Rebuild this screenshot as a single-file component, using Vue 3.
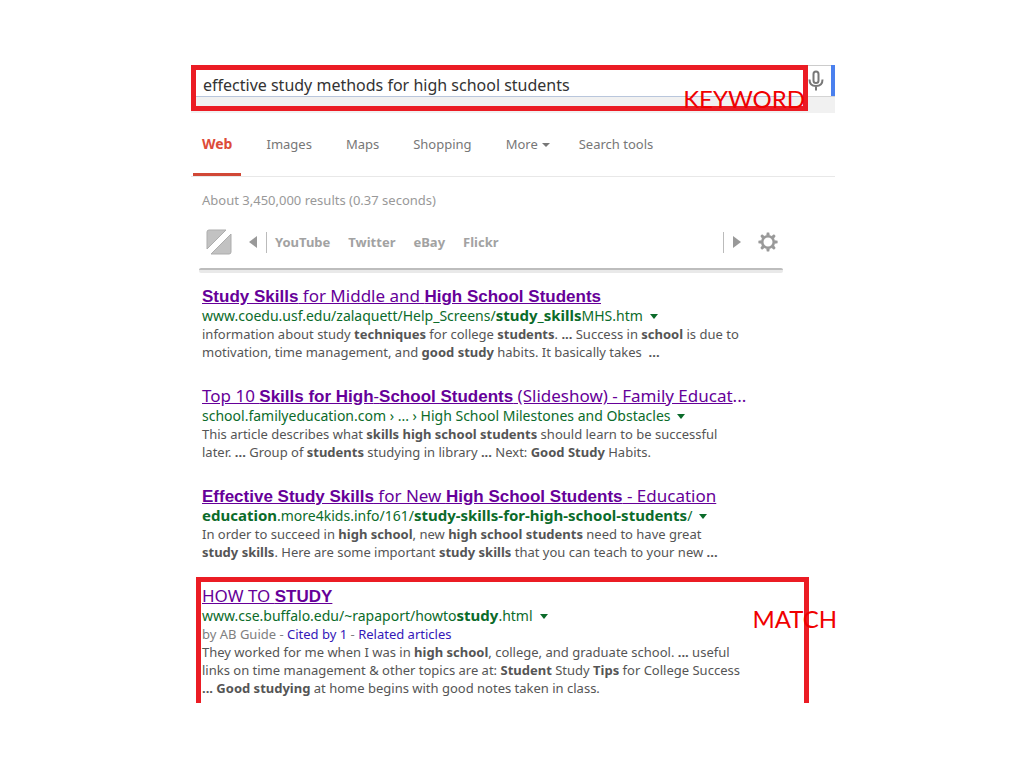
<script setup>
import { ref } from 'vue'

const query = ref('effective study methods for high school students')
const tabs = ['Web', 'Images', 'Maps', 'Shopping', 'More', 'Search tools']
const sites = ['YouTube', 'Twitter', 'eBay', 'Flickr']

// Text between asterisks is drawn bold.
const results = [
  {
    title: '*Study Skills* for Middle and *High School Students*',
    url: 'www.coedu.usf.edu/zalaquett/Help_Screens/*study_skills*MHS.htm',
    lines: [
      'information about study *techniques* for college *students*. *...* Success in *school* is due to',
      'motivation, time management, and *good study* habits. It basically takes  *...*'
    ]
  },
  {
    title: 'Top 10 *Skills for High*-*School Students* (Slideshow) - Family Educat',
    more: '...',
    url: 'school.familyeducation.com › ... › High School Milestones and Obstacles',
    lines: [
      'This article describes what *skills high school students* should learn to be successful',
      'later. *...* Group of *students* studying in library *...* Next: *Good Study* Habits.'
    ]
  },
  {
    title: '*Effective Study Skills* for New *High School Students* - Education',
    url: '*education*.more4kids.info/161/*study-skills-for-high-school-students*/',
    lines: [
      'In order to succeed in *high school*, new *high school students* need to have great',
      '*study skills*. Here are some important *study skills* that you can teach to your new *...*'
    ]
  },
  {
    title: 'HOW TO *STUDY*',
    url: 'www.cse.buffalo.edu/~rapaport/howto*study*.html',
    author: 'by AB Guide',
    match: true,
    lines: [
      'They worked for me when I was in *high school*, college, and graduate school. *...* useful',
      'links on time management & other topics are at: *Student* Study *Tips* for College Success',
      '*...* *Good studying* at home begins with good notes taken in class.'
    ]
  }
]

const parts = text => text.split('*').map((t, i) => ({ t, bold: i % 2 === 1 })).filter(p => p.t)
const teeth = [0, 45, 90, 135, 180, 225, 270, 315]
</script>

<template>
  <main class="page">
    <form class="search" @submit.prevent>
      <div class="query-box">
        <input v-model="query" type="text" aria-label="Search" />
        <span class="tag keyword">KEYWORD</span>
      </div>
      <div class="side">
        <button type="button" class="mic" aria-label="Search by voice">
          <svg width="18" height="22" viewBox="0 0 18 22" fill="none" stroke="#777" stroke-width="2">
            <rect x="5.500" y="1.500" width="5" height="11.500" rx="2.500" />
            <path d="M1.500 9.500c0 4.500 2.500 6.500 6.500 6.500s6.500-2 6.500-6.500M8 16V20.500" />
          </svg>
        </button>
        <button type="submit" class="go" aria-label="Search"></button>
      </div>
    </form>

    <nav class="tabs">
      <a v-for="(tab, i) in tabs" :key="tab" href="#" :class="{ active: i === 0 }">{{ tab }}<i v-if="tab === 'More'" class="caret"></i></a>
    </nav>

    <p class="stats">About 3,450,000 results (0.37 seconds)</p>

    <div class="toolbar">
      <svg class="logo" width="26" height="26" viewBox="0 0 26 26">
        <path d="M3 1h17L1 20V3q0-2 2-2z" fill="#c2c2c2" stroke="#adadad" />
        <path d="M25 5v18q0 2-2 2H5z" fill="#c2c2c2" stroke="#adadad" />
      </svg>
      <button type="button" class="arrow" aria-label="Previous"><i class="left"></i></button>
      <div class="sites">
        <a v-for="s in sites" :key="s" href="#">{{ s }}</a>
      </div>
      <button type="button" class="arrow" aria-label="Next"><i class="right"></i></button>
      <button type="button" class="gear" aria-label="Settings">
        <svg width="20" height="20" viewBox="-10 -10 20 20">
          <circle r="5.800" fill="none" stroke="#999" stroke-width="2.600" />
          <path v-for="a in teeth" :key="a" d="M-1.800-6.500L-1.200-9.600H1.200L1.800-6.500z" fill="#999" :transform="`rotate(${a})`" />
        </svg>
      </button>
    </div>
    <div class="bar"></div>

    <section class="results">
      <article v-for="r in results" :key="r.url" :class="{ match: r.match }">
        <h3><a href="#"><component :is="p.bold ? 'b' : 'span'" v-for="(p, i) in parts(r.title)" :key="i">{{ p.t }}</component></a>{{ r.more }}</h3>
        <div class="url"><component :is="p.bold ? 'b' : 'span'" v-for="(p, i) in parts(r.url)" :key="i">{{ p.t }}</component><i class="caret"></i></div>
        <div v-if="r.author" class="by">{{ r.author }} - <a href="#">Cited by 1</a> - <a href="#">Related articles</a></div>
        <p v-for="line in r.lines" :key="line"><component :is="p.bold ? 'b' : 'span'" v-for="(p, i) in parts(line)" :key="i">{{ p.t }}</component></p>
        <span v-if="r.match" class="tag label">MATCH</span>
      </article>
    </section>
  </main>
</template>

<style>
body {
  background: #fff;
}
</style>

<style scoped>
.page {
  box-sizing: border-box;
  max-width: 646px;
  margin: 0 auto;
  padding: 65px 0 64px 2px;
  font: 13px/18px "Noto Sans", sans-serif;
  color: #555;
}
a {
  text-decoration: none;
}
button {
  padding: 0;
  border: 0;
  background: none;
}
.search {
  display: flex;
  background: #f1f1f1;
}
.query-box {
  position: relative;
  flex: 1;
  margin-bottom: 2px;
  padding-bottom: 9px;
  border: 5px solid #eb1c24;
}
input {
  display: block;
  box-sizing: border-box;
  width: 100%;
  height: 27px;
  padding: 4px 7px 0;
  border: 0;
  border-bottom: 1px solid #b9c6dc;
  outline: 0;
  background: #fff;
  font: 16px/22px "Noto Sans", sans-serif;
  color: #333;
}
.tag {
  position: absolute;
  font: 24px/28px Lato, sans-serif;
  color: #f00000;
}
.keyword {
  right: -2px;
  bottom: -7px;
}
.side {
  display: flex;
  width: 27px;
  height: 31px;
  background: #fff;
  box-shadow: 0 1px #d4d4d4, inset 0 1px #ccc;
}
.mic {
  flex: 1;
  display: flex;
  align-items: center;
  overflow: hidden;
}
.go {
  width: 4px;
  background: #4a80ee;
}
.tabs {
  display: flex;
  gap: 16px;
  padding-left: 2px;
  border-bottom: 1px solid #e8e8e8;
}
.tabs a {
  padding: 2px 9px 0;
  border-bottom: 3px solid transparent;
  line-height: 58px;
  color: #777;
}
.tabs .active {
  border-color: #d14836;
  color: #dd4b39;
  font-size: 14px;
  font-weight: 700;
}
.caret {
  display: inline-block;
  border: 4px solid transparent;
  border-top-color: currentColor;
  border-bottom: 0;
  vertical-align: 2px;
}
.tabs .caret {
  margin: 0 -5px 0 4px;
}
.stats {
  margin: 0;
  padding: 14px 11px 20px;
  color: #999;
}
.toolbar {
  display: flex;
  align-items: center;
  height: 26px;
  padding: 0 57px 0 15px;
}
.arrow {
  display: flex;
}
.left,
.right {
  border: 6px solid transparent;
}
.left {
  margin-left: 17px;
  border-left: 0;
  border-right: 8px solid #999;
}
.right {
  margin: 0 17px 0 9px;
  border-right: 0;
  border-left: 8px solid #999;
}
.sites {
  flex: 1;
  display: flex;
  gap: 18px;
  margin-left: 9px;
  padding-left: 8px;
  border: solid #bbb;
  border-width: 0 1px;
  line-height: 21px;
}
.sites a {
  color: #a2a2a2;
  font-weight: 700;
}
.gear {
  display: flex;
}
.bar {
  height: 3px;
  margin: 13px 52px 0 8px;
  border-top: 2px solid #bdbdbd;
  border-radius: 2px;
  background: #e9e9e9;
}
.results {
  padding: 13px 26px 0 5px;
}
article {
  position: relative;
  margin-bottom: 25px;
  padding-left: 6px;
  white-space: pre;
}
.match {
  margin-top: -9px;
  margin-bottom: 0;
  padding: 4px 0 6px 1px;
  border: 5px solid #eb1c24;
  border-bottom: 0;
}
h3 {
  margin: 0;
  font-size: 17px;
  font-weight: 400;
  line-height: 20px;
  color: #609;
}
h3 a {
  color: #609;
  text-decoration: underline;
}
h3 b {
  font: 700 17px/10px "Liberation Sans", sans-serif;
}
.url {
  font-size: 14px;
  line-height: 19px;
  color: #0b6b2a;
}
.url b {
  font-size: 15px;
  line-height: 10px;
}
.url .caret {
  margin-left: 7px;
  border-top-width: 5px;
}
.by {
  color: #808080;
}
.by a {
  color: #3418b8;
}
p {
  margin: 0;
}
.label {
  top: 23px;
  right: -33px;
}
</style>
